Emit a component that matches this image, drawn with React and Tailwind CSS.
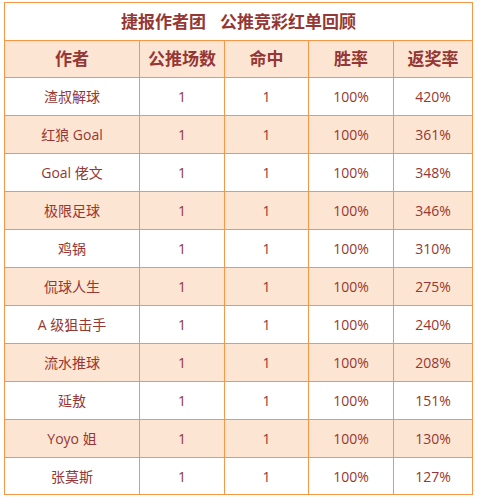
import React from "react";

const rows = [
  ["渣叔解球", "420%"],
  ["红狼 Goal", "361%"],
  ["Goal 佬文", "348%"],
  ["极限足球", "346%"],
  ["鸡锅", "310%"],
  ["侃球人生", "275%"],
  ["A 级狙击手", "240%"],
  ["流水推球", "208%"],
  ["延敖", "151%"],
  ["Yoyo 姐", "130%"],
  ["张莫斯", "127%"],
];

const heads = ["作者", "公推场数", "命中", "胜率", "返奖率"];

const grid = "grid grid-cols-[135px_85px_84px_85px_78px]";
const cell = "flex items-center justify-center border-r border-[#f79646] last:border-r-0";

function App() {
  return (
    <div
      className="bg-white w-[477px] h-[499px] pt-[2px] pl-[4px]"
      style={{ fontFamily: '"Open Sans", "Noto Sans CJK SC", sans-serif' }}
    >
      <div className="w-[469px] border border-[#f79646] text-[#953734]">
        <div className="h-[38px] flex items-center justify-center border-b border-[#f79646] text-[17px] font-bold">
          <span>捷报作者团</span>
          <span className="ml-[14px]">公推竞彩红单回顾</span>
        </div>
        <div className={grid + " h-[37px] bg-[#fde5d3] border-b border-[#f79646] text-[17px] font-bold"}>
          {heads.map((h) => (
            <div key={h} className={cell}>
              {h}
            </div>
          ))}
        </div>
        {rows.map((r, i) => (
          <div
            key={r[0]}
            className={
              grid +
              " text-[14px] " +
              (i % 2 ? "bg-[#fde5d3] " : "bg-white ") +
              (i === rows.length - 1 ? "h-[36px]" : "h-[38px] border-b border-[#f79646]")
            }
          >
            <div className={cell}>{r[0]}</div>
            <div className={cell}>1</div>
            <div className={cell}>1</div>
            <div className={cell}>100%</div>
            <div className={cell}>{r[1]}</div>
          </div>
        ))}
      </div>
    </div>
  );
}

export default App;
